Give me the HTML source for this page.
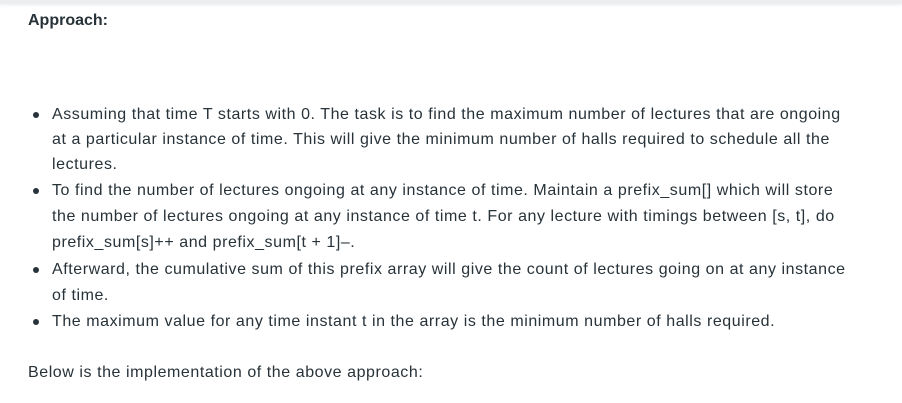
<!DOCTYPE html>
<html><head><meta charset="utf-8"><style>
body{margin:0;width:902px;height:403px;background:#fff;overflow:hidden;font-family:"Liberation Sans",sans-serif;color:#273239;position:relative}
.top{position:absolute;left:0;top:0;width:902px;height:4px;background:#eceef0;box-shadow:0 1px 3px rgba(0,0,0,.08)}
.t{position:absolute;white-space:nowrap;font-size:16px;line-height:20px;letter-spacing:0.56px}
.b{position:absolute;width:6px;height:6px;border-radius:50%;background:#273239;left:33px}
</style></head><body>
<div class="top"></div>
<div class="t" style="left:28px;top:11px;font-weight:bold;letter-spacing:0">Approach:</div>
<div class="b" style="top:112px"></div>
<div class="t" style="left:52px;top:105px">Assuming that time T starts with 0. The task is to find the maximum number of lectures that are ongoing</div>
<div class="t" style="left:52px;top:130px">at a particular instance of time. This will give the minimum number of halls required to schedule all the</div>
<div class="t" style="left:52px;top:155px">lectures.</div>
<div class="b" style="top:188px"></div>
<div class="t" style="left:52px;top:181px">To find the number of lectures ongoing at any instance of time. Maintain a prefix_sum[] which will store</div>
<div class="t" style="left:52px;top:207px">the number of lectures ongoing at any instance of time t. For any lecture with timings between [s, t], do</div>
<div class="t" style="left:52px;top:233px">prefix_sum[s]++ and prefix_sum[t + 1]–.</div>
<div class="b" style="top:267px"></div>
<div class="t" style="left:52px;top:260px">Afterward, the cumulative sum of this prefix array will give the count of lectures going on at any instance</div>
<div class="t" style="left:52px;top:286px">of time.</div>
<div class="b" style="top:319px"></div>
<div class="t" style="left:52px;top:312px">The maximum value for any time instant t in the array is the minimum number of halls required.</div>
<div class="t" style="left:28px;top:363px">Below is the implementation of the above approach:</div>
</body></html>
